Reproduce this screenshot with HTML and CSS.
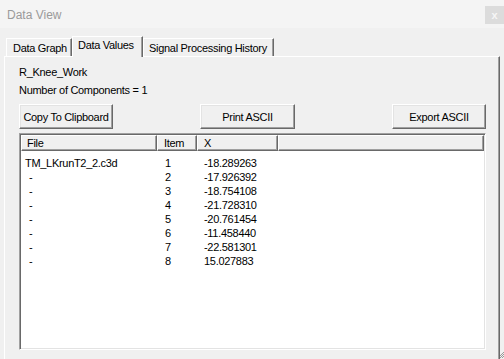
FILE: index.html
```html
<!DOCTYPE html>
<html>
<head>
<meta charset="utf-8">
<link rel="stylesheet" href="styles.css">
</head>
<body>
<div class="titlebar">
  <span class="title">Data View</span>
  <span class="close">x</span>
</div>
<div class="frame">
  <div class="tabs">
    <div class="tab">Data Graph</div>
    <div class="tab active">Data Values</div>
    <div class="tab">Signal Processing History</div>
  </div>
  <div class="panel">
    <div class="label">R_Knee_Work</div>
    <div class="label">Number of Components = 1</div>
    <div class="buttons">
      <button class="btn btn-copy">Copy To Clipboard</button>
      <button class="btn btn-print">Print ASCII</button>
      <button class="btn btn-export">Export ASCII</button>
    </div>
    <div class="list">
      <div class="header">
        <div class="hc c-file">File</div>
        <div class="hc c-item">Item</div>
        <div class="hc c-x">X</div>
        <div class="hc c-fill"></div>
      </div>
      <div class="rows">
        <div class="row"><span class="c-file">TM_LKrunT2_2.c3d</span><span class="c-item">1</span><span class="c-x">-18.289263</span></div>
        <div class="row"><span class="c-file dash">-</span><span class="c-item">2</span><span class="c-x">-17.926392</span></div>
        <div class="row"><span class="c-file dash">-</span><span class="c-item">3</span><span class="c-x">-18.754108</span></div>
        <div class="row"><span class="c-file dash">-</span><span class="c-item">4</span><span class="c-x">-21.728310</span></div>
        <div class="row"><span class="c-file dash">-</span><span class="c-item">5</span><span class="c-x">-20.761454</span></div>
        <div class="row"><span class="c-file dash">-</span><span class="c-item">6</span><span class="c-x">-11.458440</span></div>
        <div class="row"><span class="c-file dash">-</span><span class="c-item">7</span><span class="c-x">-22.581301</span></div>
        <div class="row"><span class="c-file dash">-</span><span class="c-item">8</span><span class="c-x">15.027883</span></div>
      </div>
    </div>
  </div>
</div>
<svg class="grip" width="6" height="10" viewBox="0 0 6 10">
  <path d="M0 9 L6 3 M2 9 L6 5 M4 9 L6 7" stroke="#9a9a9a" stroke-width="1" fill="none"/>
</svg>
</body>
</html>
```
FILE: styles.css
```css
html, body {
  margin: 0;
  padding: 0;
}
body {
  width: 504px;
  height: 359px;
  overflow: hidden;
  background: #f0f0f0;
  font-family: "Liberation Sans", Arial, sans-serif;
  font-size: 11px;
  letter-spacing: -0.3px;
  color: #000;
  position: relative;
}
.titlebar {
  height: 28px;
  background: #f4f4f4;
  display: flex;
  align-items: flex-start;
  box-sizing: border-box;
}
.title {
  font-size: 12px;
  letter-spacing: 0;
  color: #9a9a9a;
  margin-left: 7px;
  margin-top: 8px;
}
.close {
  margin-left: auto;
  margin-top: 6px;
  width: 19px;
  height: 18px;
  background: #dcdcdc;
  color: #f6f6f6;
  font-size: 11px;
  font-weight: bold;
  letter-spacing: 0;
  display: flex;
  align-items: center;
  justify-content: center;
}
.frame {
  padding: 0 4px 0 4px;
}
.tabs {
  height: 28px;
  display: flex;
  align-items: flex-end;
  padding-left: 2px;
  position: relative;
  z-index: 2;
}
.tab {
  box-sizing: border-box;
  height: 18px;
  padding: 2px 0 0 6px;
  border-top: 1px solid #fff;
  border-left: 1px solid #fff;
  border-right: 1px solid #696969;
  box-shadow: inset -1px 0 #a0a0a0;
  background: #f0f0f0;
  line-height: 14px;
  white-space: nowrap;
}
.tab:nth-child(1) { width: 66px; }
.tab:nth-child(3) { width: 131px; padding-left: 5px; }
.tab.active {
  width: 71px;
  height: 21px;
  margin-bottom: -1px;
  padding-left: 5px;
  padding-top: 1px;
  line-height: 14px;
}
.panel {
  box-sizing: border-box;
  height: 310px;
  border-top: 1px solid #fff;
  border-left: 1px solid #fff;
  border-right: 1px solid #696969;
  box-shadow: inset -1px 0 #a0a0a0;
  padding: 6px 13px 0 14px;
  position: relative;
  z-index: 1;
}
.label {
  line-height: 18px;
  height: 18px;
  white-space: nowrap;
}
.buttons {
  margin-top: 5px;
  display: flex;
  height: 25px;
}
.btn {
  box-sizing: border-box;
  height: 25px;
  width: 94px;
  margin: 0;
  padding: 0;
  font: inherit;
  letter-spacing: inherit;
  color: #000;
  background: #f0f0f0;
  border: 1px solid;
  border-color: #fff #696969 #696969 #fff;
  box-shadow: inset -1px -1px #a0a0a0, inset 1px 1px #e3e3e3;
  white-space: nowrap;
}
.btn-print {
  width: 95px;
  margin-left: 87px;
}
.btn-export {
  margin-left: auto;
}
.list {
  margin-top: 4px;
  box-sizing: border-box;
  height: 217px;
  background: #fff;
  border: 1px solid;
  border-color: #a0a0a0 #fff #fff #a0a0a0;
  box-shadow: inset 1px 1px #696969, inset -1px -1px #e3e3e3;
  padding: 1px;
}
.header {
  display: flex;
  height: 16px;
}
.hc {
  box-sizing: border-box;
  height: 16px;
  background: #f0f0f0;
  border-top: 1px solid #fff;
  border-left: 1px solid #fff;
  border-right: 1px solid #696969;
  border-bottom: 1px solid #696969;
  box-shadow: inset -1px -1px #a0a0a0;
  line-height: 14px;
  white-space: nowrap;
}
.header .c-file { width: 136px; padding-left: 5px; }
.header .c-item { width: 40px; padding-left: 6px; }
.header .c-x { width: 81px; padding-left: 6px; }
.header .c-fill { flex: 1; }
.rows {
  padding-top: 5px;
}
.row {
  display: flex;
  height: 14px;
  line-height: 14px;
  white-space: nowrap;
}
.row .c-file { width: 136px; padding-left: 4px; box-sizing: border-box; }
.row .c-file.dash { padding-left: 8px; }
.row .c-item { width: 40px; padding-left: 8px; box-sizing: border-box; }
.row .c-x { padding-left: 7px; }
.grip {
  position: absolute;
  right: 0;
  bottom: 0;
}
```
